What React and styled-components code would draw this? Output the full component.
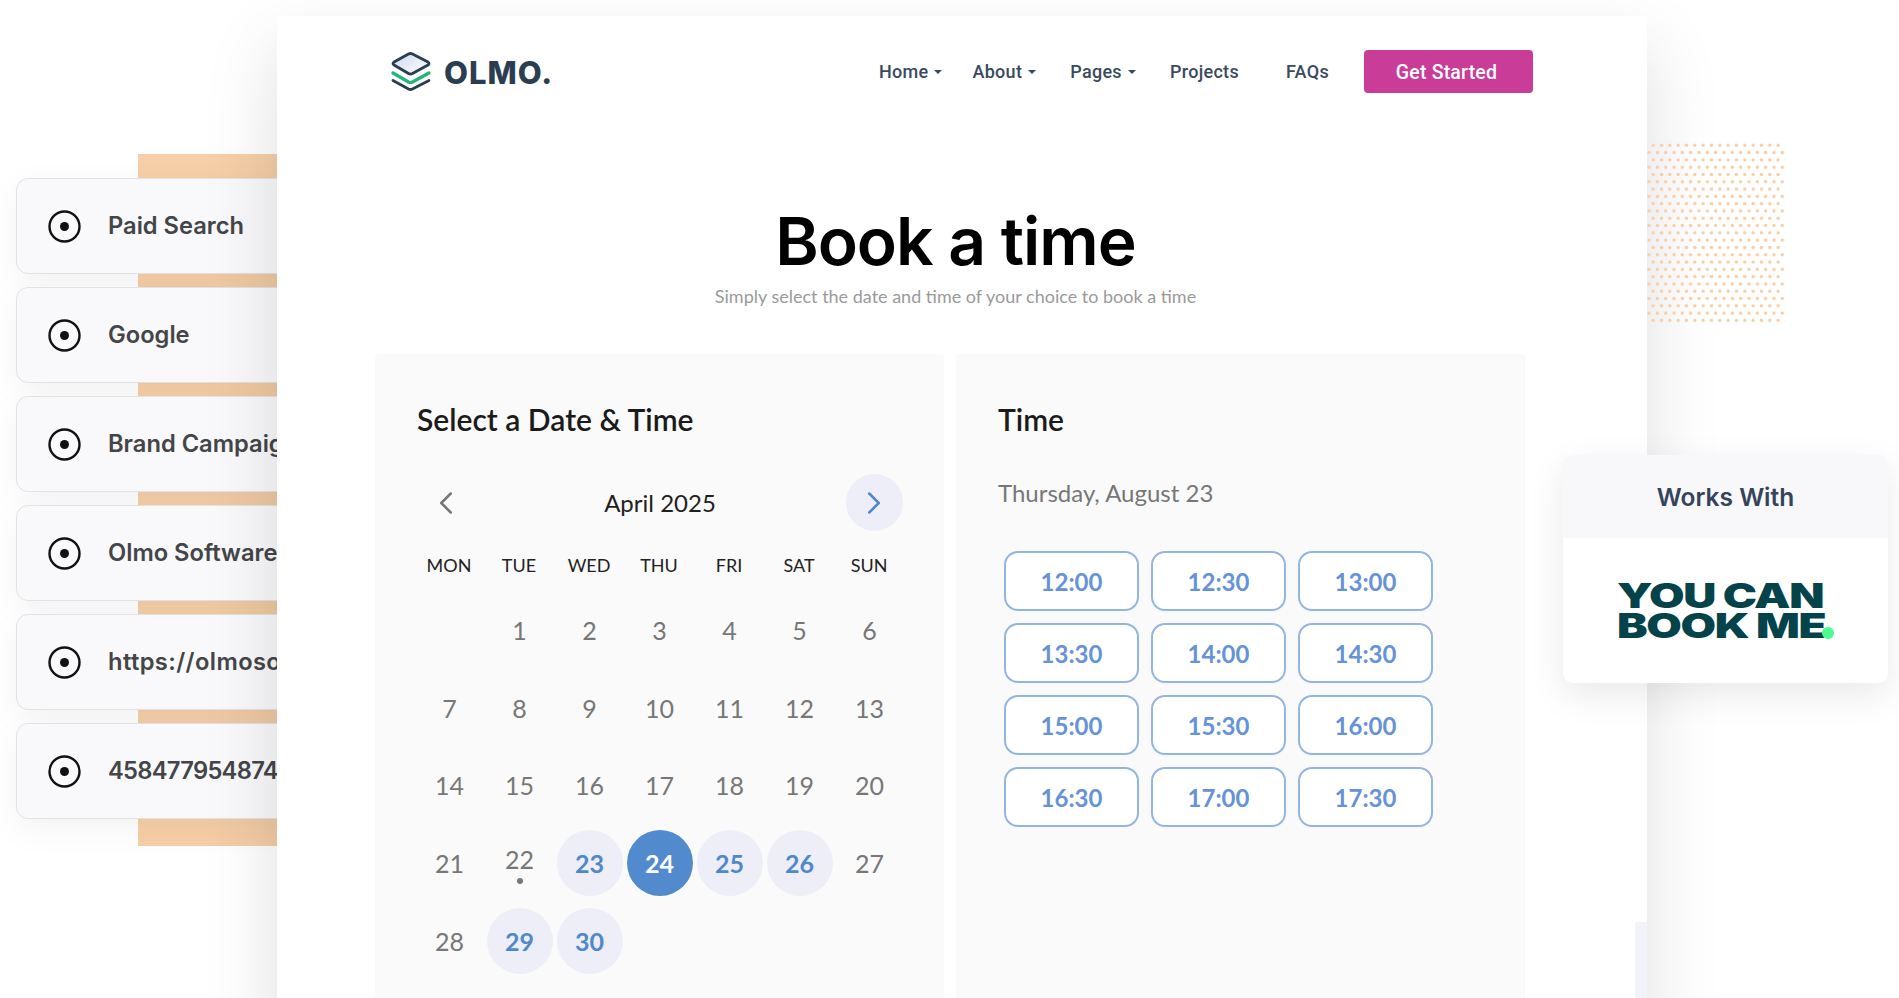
import React from "react";
import styled, { createGlobalStyle } from "styled-components";
import { ChevronLeft, ChevronRight } from "lucide-react";

const GlobalStyle = createGlobalStyle`
  html, body {
    margin: 0;
    padding: 0;
    background: #fff;
    overflow: hidden;
  }
  * { box-sizing: border-box; }
`;

const Page = styled.div`
  display: grid;
  grid-template-columns: 277px 1370px 252px;
  width: 1899px;
  height: 998px;
  overflow: hidden;
  font-family: "Lato", "Liberation Sans", sans-serif;
`;

const LeftRail = styled.aside`
  display: flex;
  flex-direction: column;
  gap: 13px;
  padding: 178px 0 0 16px;
  background: linear-gradient(#f6cfa8, #f6cfa8) no-repeat 138px 154px / 139px 692px;
`;

const SourceCard = styled.div`
  display: flex;
  flex: none;
  align-items: center;
  gap: 27px;
  width: 420px;
  height: 96px;
  padding-left: 31px;
  background: #f9f9fb;
  border: 1px solid #e2e2e4;
  border-radius: 12px;
  box-shadow: 0 10px 34px rgba(0, 0, 0, 0.05);
  white-space: nowrap;
`;

const SourceLabel = styled.span`
  margin-top: -2px;
  font-family: "Inter", sans-serif;
  font-size: 23.7px;
  font-weight: 600;
  letter-spacing: ${(p) => p.$spacing || 0}px;
  color: #444548;
`;

const MainShadow = styled.div`
  position: relative;
  z-index: 2;
  margin-top: 16px;
  height: 1100px;
  box-shadow: 0 30px 70px rgba(0, 0, 0, 0.13);
`;

const Main = styled.main`
  height: 982px;
  padding: 34px 0 0;
  overflow: hidden;
  background: linear-gradient(#f2f3f8, #f2f3f8) no-repeat right bottom / 12px 76px, #fff;
`;

const Header = styled.header`
  display: flex;
  align-items: center;
  justify-content: space-between;
  height: 43px;
  padding: 0 114px;
`;

const Brand = styled.div`
  display: flex;
  align-items: center;
  gap: 13px;
`;

const BrandName = styled.span`
  padding-top: 2px;
  font-family: "Inter", sans-serif;
  font-size: 31px;
  font-weight: 800;
  letter-spacing: 1px;
  color: #2b3d51;
`;

const Nav = styled.nav`
  display: flex;
  align-items: center;
`;

const NavLink = styled.a`
  display: flex;
  align-items: center;
  gap: 6px;
  margin-right: ${(p) => p.$gap}px;
  font-family: "Roboto", sans-serif;
  font-size: 18px;
  font-weight: 500;
  letter-spacing: 0.3px;
  color: #3a4a5e;
`;

const Caret = styled.i`
  width: 0;
  height: 0;
  border-left: 4px solid transparent;
  border-right: 4px solid transparent;
  border-top: 4px solid #3a4a5e;
`;

const CtaButton = styled.button`
  width: 169px;
  height: 43px;
  padding: 2px 4px 0 0;
  border: 0;
  border-radius: 4px;
  background: #c93c97;
  font-family: "Roboto", sans-serif;
  font-size: 19.5px;
  font-weight: 500;
  letter-spacing: 0.2px;
  color: #fff;
`;

const Hero = styled.section`
  margin: 113px 0 0 -13px;
  text-align: center;
`;

const Title = styled.h1`
  margin: 0;
  font-family: "Inter", sans-serif;
  font-size: 66px;
  font-weight: 600;
  line-height: 70px;
  letter-spacing: -1px;
  color: #000;
`;

const Subtitle = styled.p`
  margin: 9px 0 0;
  font-size: 18px;
  line-height: 22px;
  color: #9a9a9a;
`;

const Panels = styled.div`
  display: flex;
  gap: 12px;
  margin: 47px 0 0 98px;
`;

const Panel = styled.section`
  flex: none;
  width: 569px;
  height: 720px;
  padding: 48px 39px 0 42px;
  border-radius: 4px;
  background: #fafafa;
`;

const PanelTitle = styled.h2`
  margin: 0;
  font-size: 30px;
  font-weight: 600;
  line-height: 34px;
  color: #1b1b1b;
`;

const Calendar = styled.div`
  margin: 37px 0 0 -3px;
`;

const MonthBar = styled.div`
  display: flex;
  align-items: center;
  justify-content: space-between;
  padding: 0 2px 0 3px;
  height: 59px;
`;

const MonthName = styled.span`
  font-size: 24px;
  color: #1f1f1f;
`;

const ArrowButton = styled.button`
  display: flex;
  align-items: center;
  justify-content: center;
  width: 57px;
  height: 57px;
  padding: 0;
  border: 0;
  border-radius: 50%;
  background: ${(p) => (p.$active ? "#eeeef8" : "transparent")};
  color: ${(p) => (p.$active ? "#4f89cc" : "#777")};
`;

const WeekRow = styled.div`
  display: grid;
  grid-template-columns: repeat(7, 70px);
  margin-top: 22px;
  text-align: center;
  font-size: 18px;
  line-height: 22px;
  color: #222;
`;

const DayGrid = styled.div`
  display: grid;
  grid-template-columns: repeat(7, 70px);
  grid-auto-rows: 77.7px;
  margin-top: 15px;
`;

const Day = styled.div`
  position: relative;
  display: flex;
  align-items: center;
  justify-content: center;
  width: 66px;
  height: 66px;
  margin: 6px 2.5px;
  border-radius: 50%;
  font-size: 25px;
  font-weight: ${(p) => (p.$state === "plain" ? 400 : 700)};
  color: ${(p) => (p.$state === "plain" ? "#777" : p.$state === "selected" ? "#fff" : "#4f89cc")};
  background: ${(p) => (p.$state === "plain" ? "transparent" : p.$state === "selected" ? "#528ace" : "#eeeef8")};
`;

const TodayNumber = styled.span`
  margin-top: -8px;
`;

const TodayDot = styled.i`
  position: absolute;
  left: 30px;
  top: 48px;
  width: 6px;
  height: 6px;
  border-radius: 50%;
  background: #777;
`;

const DateLine = styled.p`
  margin: 42px 0 0;
  font-size: 24px;
  line-height: 30px;
  color: #777;
`;

const SlotGrid = styled.div`
  display: grid;
  grid-template-columns: repeat(3, 135px);
  grid-auto-rows: 60px;
  gap: 12px 12px;
  margin: 43px 0 0 6px;
`;

const Slot = styled.button`
  padding: 0;
  border: 2px solid #93b5e4;
  border-radius: 14px;
  background: #fff;
  font-family: "Lato", sans-serif;
  font-size: 24px;
  font-weight: 700;
  color: #6592d8;
`;

const RightRail = styled.aside`
  position: relative;
  z-index: 3;
  padding-top: 141px;
`;

const DotField = styled.div`
  width: 138px;
  height: 181px;
  background-image:
    radial-gradient(circle at center, #f8cfa8 1.6px, transparent 2px),
    radial-gradient(circle at center, #f8cfa8 1.6px, transparent 2px);
  background-size: 8.33px 14.6px;
  background-position: 2px -3px, 6.2px 4.3px;
`;

const WorksCard = styled.div`
  width: 325px;
  margin: 133px 0 0 -84px;
  overflow: hidden;
  border-radius: 10px;
  background: #fff;
  box-shadow: 0 12px 36px rgba(0, 0, 0, 0.09);
`;

const WorksHead = styled.div`
  display: flex;
  align-items: center;
  justify-content: center;
  height: 83px;
  background: #f8f8fb;
  font-family: "Inter", sans-serif;
  font-size: 24.5px;
  font-weight: 600;
  color: #35445a;
`;

const WorksBody = styled.div`
  display: flex;
  align-items: center;
  justify-content: center;
  height: 145px;
`;

const PartnerLogo = styled.div`
  position: relative;
  width: 204px;
  margin-left: -13px;
`;

const PartnerName = styled.div`
  font-family: "Inter", sans-serif;
  font-size: 34px;
  font-weight: 900;
  line-height: 29.5px;
  letter-spacing: -1px;
  color: #04434a;
  white-space: nowrap;
  transform: scaleX(1.35);
  transform-origin: left center;
`;

const LogoDot = styled.i`
  position: absolute;
  right: -13px;
  bottom: 1px;
  width: 12px;
  height: 12px;
  border-radius: 50%;
  background: #4dfb8e;
`;

function RadioIcon() {
  return (
    <svg width="33" height="33" viewBox="0 0 33 33" style={{ flex: "none" }}>
      <circle cx="16.5" cy="16.5" r="15" fill="none" stroke="#111" strokeWidth="2.4" />
      <circle cx="16.5" cy="16.5" r="4.5" fill="#111" />
    </svg>
  );
}

function LogoMark() {
  return (
    <svg width="40" height="40" viewBox="0 0 40 40" fill="none" strokeLinecap="round" strokeLinejoin="round">
      <defs>
        <linearGradient id="brandFill" x1="0" y1="0" x2="1" y2="1">
          <stop offset="0" stopColor="#cdd9ee" />
          <stop offset="1" stopColor="#ffffff" />
        </linearGradient>
      </defs>
      <path d="M17.5 2 Q19.5 1 21.5 2 L37 10 Q39 11.5 37 13 L21.5 21.5 Q19.5 22.5 17.5 21.5 L3 13 Q1 11.5 3 10 Z" fill="url(#brandFill)" stroke="#2b3d51" strokeWidth="2.8" />
      <path d="M2 21 L17.5 30 Q19.5 31 21.5 30 L38 21" stroke="#22b573" strokeWidth="3.2" />
      <path d="M2 28.5 L17.5 37 Q19.5 38 21.5 37 L38 28.5" stroke="#2b3d51" strokeWidth="2.8" />
    </svg>
  );
}

const sources = [
  { name: "Paid Search" },
  { name: "Google" },
  { name: "Brand Campaign" },
  { name: "Olmo Software" },
  { name: "https://olmosoftware.com", spacing: 0.4 },
  { name: "458477954874", spacing: -0.7 },
];

const navLinks = [
  { name: "Home", caret: true, gap: 30 },
  { name: "About", caret: true, gap: 34 },
  { name: "Pages", caret: true, gap: 34 },
  { name: "Projects", gap: 47 },
  { name: "FAQs", gap: 35 },
];

const weekDays = ["MON", "TUE", "WED", "THU", "FRI", "SAT", "SUN"];
const openDays = [23, 25, 26, 29, 30];
const slots = [
  "12:00", "12:30", "13:00",
  "13:30", "14:00", "14:30",
  "15:00", "15:30", "16:00",
  "16:30", "17:00", "17:30",
];

function dayState(day) {
  if (day === 24) return "selected";
  return openDays.includes(day) ? "open" : "plain";
}

export default function App() {
  const days = [null, ...Array.from({ length: 30 }, (_, i) => i + 1)];

  return (
    <>
      <GlobalStyle />
      <Page>
        <LeftRail>
          {sources.map((item) => (
            <SourceCard key={item.name}>
              <RadioIcon />
              <SourceLabel $spacing={item.spacing}>{item.name}</SourceLabel>
            </SourceCard>
          ))}
        </LeftRail>

        <MainShadow>
          <Main>
            <Header>
              <Brand>
                <LogoMark />
                <BrandName>OLMO.</BrandName>
              </Brand>
              <Nav>
                {navLinks.map((link) => (
                  <NavLink key={link.name} $gap={link.gap}>
                    {link.name}
                    {link.caret && <Caret />}
                  </NavLink>
                ))}
                <CtaButton>Get Started</CtaButton>
              </Nav>
            </Header>

            <Hero>
              <Title>Book a time</Title>
              <Subtitle>Simply select the date and time of your choice to book a time</Subtitle>
            </Hero>

            <Panels>
              <Panel>
                <PanelTitle>Select a Date &amp; Time</PanelTitle>
                <Calendar>
                  <MonthBar>
                    <ArrowButton aria-label="Previous month">
                      <ChevronLeft size={38} strokeWidth={1.6} />
                    </ArrowButton>
                    <MonthName>April 2025</MonthName>
                    <ArrowButton $active aria-label="Next month">
                      <ChevronRight size={38} strokeWidth={1.6} />
                    </ArrowButton>
                  </MonthBar>
                  <WeekRow>
                    {weekDays.map((d) => (
                      <span key={d}>{d}</span>
                    ))}
                  </WeekRow>
                  <DayGrid>
                    {days.map((day, i) =>
                      day === null ? (
                        <span key={i} />
                      ) : (
                        <Day key={day} $state={dayState(day)}>
                          {day === 22 ? (
                            <>
                              <TodayNumber>{day}</TodayNumber>
                              <TodayDot />
                            </>
                          ) : (
                            day
                          )}
                        </Day>
                      )
                    )}
                  </DayGrid>
                </Calendar>
              </Panel>

              <Panel>
                <PanelTitle>Time</PanelTitle>
                <DateLine>Thursday, August 23</DateLine>
                <SlotGrid>
                  {slots.map((s) => (
                    <Slot key={s}>{s}</Slot>
                  ))}
                </SlotGrid>
              </Panel>
            </Panels>
          </Main>
        </MainShadow>

        <RightRail>
          <DotField />
          <WorksCard>
            <WorksHead>Works With</WorksHead>
            <WorksBody>
              <PartnerLogo>
                <PartnerName>
                  YOU CAN
                  <br />
                  BOOK ME
                </PartnerName>
                <LogoDot />
              </PartnerLogo>
            </WorksBody>
          </WorksCard>
        </RightRail>
      </Page>
    </>
  );
}
